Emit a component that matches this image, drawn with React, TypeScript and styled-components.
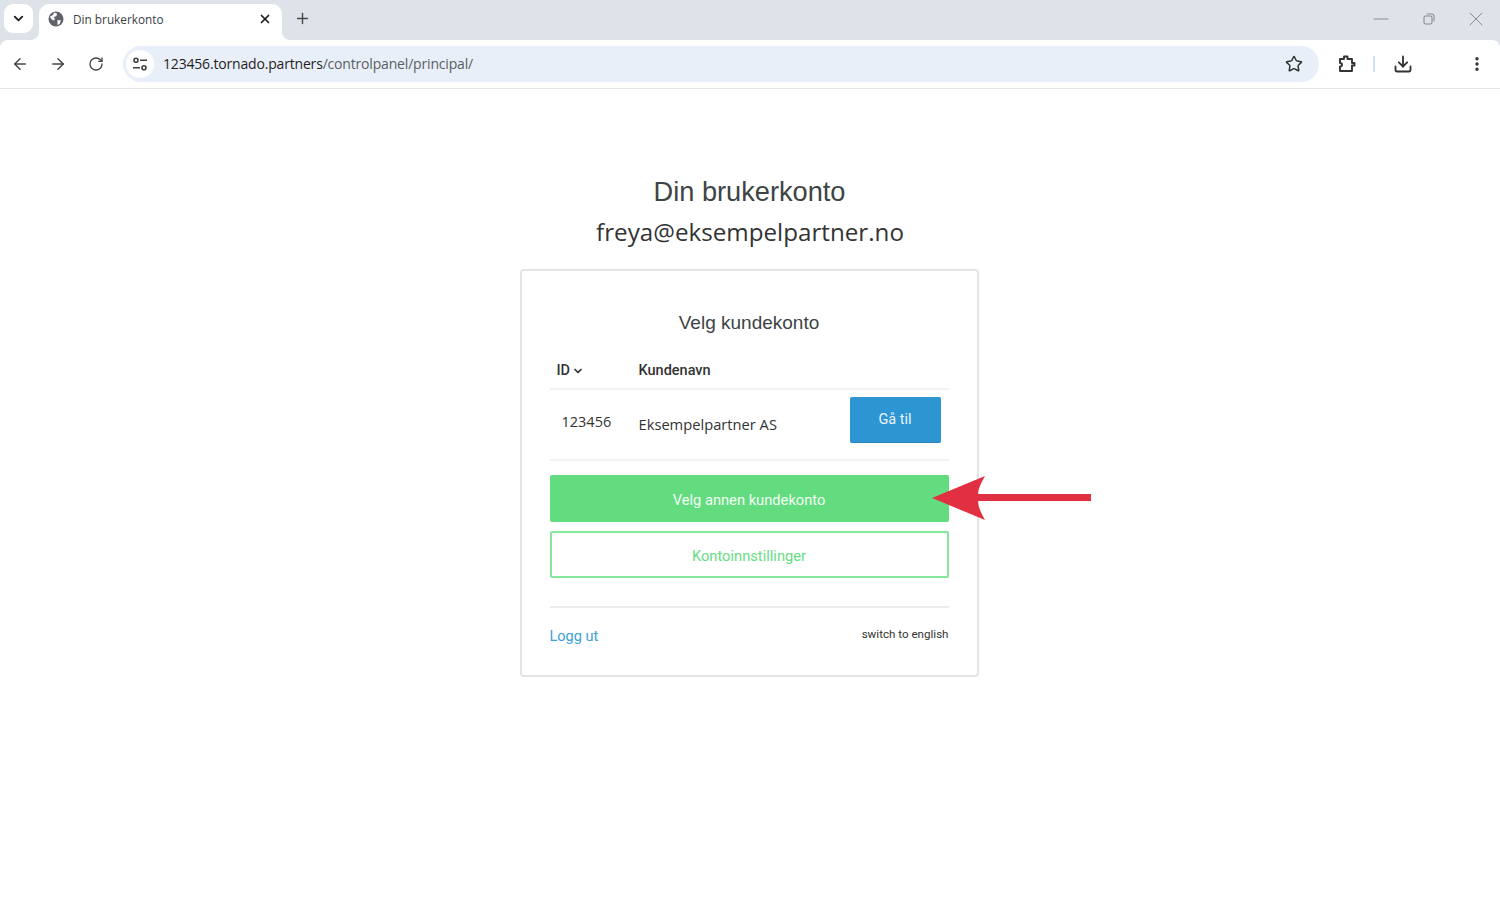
import React from "react";
import styled, { createGlobalStyle } from "styled-components";
import { ChevronDown, X, Plus, ArrowLeft, ArrowRight, RotateCw, Star, Download, Minus, EllipsisVertical } from "lucide-react";

const GlobalStyle = createGlobalStyle`
  html, body { margin: 0; padding: 0; background: #fff; }
  body { font-family: "Liberation Sans", Arial, sans-serif; overflow: hidden; }
  * { box-sizing: border-box; }
`;

const Screen = styled.div`
  width: 1500px;
  height: 900px;
  position: relative;
  background: #fff;
`;

const BrowserChrome = styled.header`
  background: #dee3ea;
`;

const TabStrip = styled.div`
  height: 40px;
  display: flex;
  align-items: flex-end;
  padding-left: 4px;
`;

const TabSearch = styled.div`
  width: 29px;
  height: 29px;
  margin-bottom: 7px;
  border-radius: 9px;
  background: #fff;
  display: flex;
  align-items: center;
  justify-content: center;
  color: #1f1f1f;
`;

const Tab = styled.div`
  position: relative;
  width: 243px;
  height: 36px;
  margin-left: 6px;
  background: #fff;
  border-radius: 10px 10px 0 0;
  display: flex;
  align-items: center;
  padding: 0 10px 7px 9px;
  color: #3c4043;
  font-family: "Open Sans", sans-serif;
  font-size: 11.8px;

  &::before,
  &::after {
    content: "";
    position: absolute;
    bottom: 0;
    width: 8px;
    height: 8px;
  }
  &::before {
    left: -8px;
    background: radial-gradient(circle at 0 0, transparent 7.6px, #fff 8.2px);
  }
  &::after {
    right: -8px;
    background: radial-gradient(circle at 100% 0, transparent 7.6px, #fff 8.2px);
  }
`;

const TabTitle = styled.span`
  flex: 1;
  margin-left: 9px;
  margin-top: 1px;
`;

const NewTab = styled.div`
  margin: 0 0 7px 12px;
  height: 30px;
  width: 18px;
  display: flex;
  align-items: center;
  color: #444746;
`;

const WindowControls = styled.div`
  margin-left: auto;
  height: 40px;
  display: flex;
  align-items: center;
  gap: 29.5px;
  padding: 0 12px 2px 0;
  color: #8a8d91;
`;

const Toolbar = styled.div`
  height: 49px;
  background: #fff;
  border-bottom: 1px solid #e6e6e6;
  border-radius: 8px 8px 0 0;
  display: flex;
  align-items: center;
  padding: 0 0 1px 11px;
  color: #444746;
`;

const NavButton = styled.div`
  width: 18px;
  height: 18px;
  margin-right: 20px;
  display: flex;
  align-items: center;
  justify-content: center;
`;

const Omnibox = styled.div`
  width: 1196px;
  height: 36px;
  margin-left: -2px;
  border-radius: 18px;
  background: #e9eff8;
  display: flex;
  align-items: center;
  padding: 0 16px 0 3px;
`;

const SiteBadge = styled.div`
  width: 28px;
  height: 28px;
  border-radius: 50%;
  background: #fff;
  display: flex;
  align-items: center;
  justify-content: center;
`;

const Url = styled.div`
  flex: 1;
  margin-left: 9px;
  font-family: "Open Sans", sans-serif;
  font-size: 14px;
  letter-spacing: -0.18px;
  color: #5a5e63;
`;

const UrlHost = styled.span`
  color: #1f1f1f;
`;

const ToolbarEnd = styled.div`
  display: flex;
  align-items: center;
  margin-left: 18px;
`;

const ToolDivider = styled.div`
  width: 2px;
  height: 16px;
  background: #d3e3fd;
  margin: 0 18px 0 16px;
`;

const MenuDots = styled.div`
  margin-left: 55px;
  display: flex;
`;

const Page = styled.main`
  display: flex;
  flex-direction: column;
  align-items: center;
  padding-top: 85px;
`;

const Title = styled.h1`
  margin: 0 0 0 -1px;
  width: 458px;
  text-align: center;
  font-size: 27.2px;
  line-height: 36px;
  font-weight: 400;
  color: #3d4445;
`;

const Email = styled.div`
  margin-top: 4px;
  width: 458px;
  text-align: center;
  font-family: "Open Sans", sans-serif;
  font-size: 24.2px;
  line-height: 36px;
  color: #333;
`;

const Card = styled.section`
  margin-top: 19px;
  width: 459px;
  height: 408px;
  margin-left: -2px;
  border: 2px solid #e4e4e4;
  border-radius: 4px;
  padding: 38px 28px 0 28px;
  display: flex;
  flex-direction: column;
`;

const CardTitle = styled.h2`
  margin: 0;
  text-align: center;
  font-size: 19px;
  line-height: 28px;
  font-weight: 400;
  color: #3d4445;
`;

const Table = styled.div`
  margin-top: 18px;
`;

const HeadRow = styled.div`
  display: flex;
  align-items: center;
  height: 35px;
  border-bottom: 2px solid #f3f3f3;
  font-family: Roboto, sans-serif;
  font-size: 14.5px;
  font-weight: 500;
  color: #333;
  padding-bottom: 2px;
`;

const IdHead = styled.div`
  width: 89px;
  padding-left: 7px;
  display: flex;
  align-items: center;
  gap: 2px;
`;

const BodyRow = styled.div`
  display: flex;
  align-items: center;
  height: 71px;
  border-bottom: 2px solid #f3f3f3;
  font-family: "Open Sans", sans-serif;
  font-size: 14.7px;
  color: #333;
`;

const IdCell = styled.div`
  width: 89px;
  padding-left: 12px;
  margin-top: -6px;
  font-size: 14.5px;
`;

const NameCell = styled.div`
  flex: 1;
  margin-top: -2px;
`;

const GoButton = styled.button`
  width: 91px;
  height: 46px;
  margin: 0 8px 9px 0;
  border: 0;
  border-bottom: 1px solid #2a86bd;
  border-radius: 2px;
  background: #2e95d3;
  color: #e8f4fb;
  font-family: Roboto, sans-serif;
  font-size: 14.5px;
`;

const WideButton = styled.button<{ $outline?: boolean }>`
  display: block;
  width: 100%;
  height: 47px;
  margin-top: ${(p) => (p.$outline ? 9 : 14)}px;
  border: ${(p) => (p.$outline ? "2px solid #85e89d" : "0")};
  border-radius: 2px;
  background: ${(p) => (p.$outline ? "#fff" : "#62dc7e")};
  color: ${(p) => (p.$outline ? "#66dd82" : "#f4fdf6")};
  font-family: Roboto, sans-serif;
  font-size: 14.7px;
  padding: 2px 0 0;
`;

const Footer = styled.div`
  margin-top: 28px;
  border-top: 2px solid #ececec;
  display: flex;
  justify-content: space-between;
  padding-top: 19px;
`;

const LogoutLink = styled.a`
  color: #3b9fdb;
  font-family: Roboto, sans-serif;
  font-size: 14.5px;
  line-height: 20px;
`;

const LangLink = styled.a`
  color: #333;
  font-family: Roboto, sans-serif;
  font-size: 11.6px;
  line-height: 14px;
`;

const ArrowMark = styled.svg`
  position: absolute;
  left: 930px;
  top: 473px;
`;

const Globe = () => (
  <svg width="16" height="16" viewBox="0 0 16 16">
    <circle cx="8" cy="8" r="7.5" fill="#5f6368" />
    <path d="M2 5.5 L5 4 L6 1.5 L9 2.5 L8.5 5 L6 6 L7 8.5 L5 9.5 L2.5 7Z M9.5 9 L13 9.5 L11.5 13 L9.5 14 Z" fill="#fff" />
  </svg>
);

const SiteSettings = () => (
  <svg width="16" height="16" viewBox="0 0 16 16" fill="none" stroke="#3c4043" strokeWidth="1.6">
    <circle cx="4" cy="4.2" r="2" />
    <path d="M8 4.2h7M1 11.8h7" />
    <circle cx="12" cy="11.8" r="2" />
  </svg>
);

const RestoreIcon = () => (
  <svg width="12" height="12" viewBox="0 0 12 12" fill="none" stroke="#8a8d91" strokeWidth="1.1">
    <rect x="1" y="3" width="8" height="8" rx="1.6" />
    <path d="M3.5 1h5a2.5 2.5 0 0 1 2.5 2.5v5" />
  </svg>
);

const ExtensionIcon = () => (
  <svg width="20" height="20" viewBox="0 0 20 20" fill="none" stroke="#333" strokeWidth="1.9" strokeLinejoin="round">
    <path d="M3 5h4V2.5h3.5V5H15v4h2.5v2.5H15V17H3v-4.5c1.6 0 2-1 2-1.8S4.6 9 3 9Z" />
  </svg>
);

const RedArrow = () => (
  <ArrowMark width="164" height="50" viewBox="0 0 164 50">
    <path d="M2 25 L55 3 C50 12 48 17 48 21 L161 21 L161 28 L48 28 C48 33 50 38 55 47 Z" fill="#e03042" />
  </ArrowMark>
);

export default function App() {
  return (
    <Screen>
      <GlobalStyle />
      <BrowserChrome>
        <TabStrip>
          <TabSearch>
            <ChevronDown size={15} strokeWidth={3} />
          </TabSearch>
          <Tab>
            <Globe />
            <TabTitle>Din brukerkonto</TabTitle>
            <X size={14} strokeWidth={3} color="#1f1f1f" />
          </Tab>
          <NewTab>
            <Plus size={17} strokeWidth={2} />
          </NewTab>
          <WindowControls>
            <Minus size={24} strokeWidth={1} />
            <RestoreIcon />
            <X size={24} strokeWidth={1} />
          </WindowControls>
        </TabStrip>
        <Toolbar>
          <NavButton>
            <ArrowLeft size={18} strokeWidth={2} />
          </NavButton>
          <NavButton>
            <ArrowRight size={18} strokeWidth={2} />
          </NavButton>
          <NavButton>
            <RotateCw size={16} strokeWidth={2} />
          </NavButton>
          <Omnibox>
            <SiteBadge>
              <SiteSettings />
            </SiteBadge>
            <Url>
              <UrlHost>123456.tornado.partners</UrlHost>/controlpanel/principal/
            </Url>
            <Star size={18} strokeWidth={2} color="#333" />
          </Omnibox>
          <ToolbarEnd>
            <ExtensionIcon />
            <ToolDivider />
            <Download size={20} strokeWidth={2.2} color="#333" />
            <MenuDots>
              <EllipsisVertical size={18} strokeWidth={2.6} color="#333" />
            </MenuDots>
          </ToolbarEnd>
        </Toolbar>
      </BrowserChrome>
      <Page>
        <Title>Din brukerkonto</Title>
        <Email>freya@eksempelpartner.no</Email>
        <Card>
          <CardTitle>Velg kundekonto</CardTitle>
          <Table>
            <HeadRow>
              <IdHead>
                ID <ChevronDown size={12} strokeWidth={3.5} />
              </IdHead>
              <div>Kundenavn</div>
            </HeadRow>
            <BodyRow>
              <IdCell>123456</IdCell>
              <NameCell>Eksempelpartner AS</NameCell>
              <GoButton>Gå til</GoButton>
            </BodyRow>
          </Table>
          <WideButton>Velg annen kundekonto</WideButton>
          <WideButton $outline>Kontoinnstillinger</WideButton>
          <Footer>
            <LogoutLink>Logg ut</LogoutLink>
            <LangLink>switch to english</LangLink>
          </Footer>
        </Card>
      </Page>
      <RedArrow />
    </Screen>
  );
}
